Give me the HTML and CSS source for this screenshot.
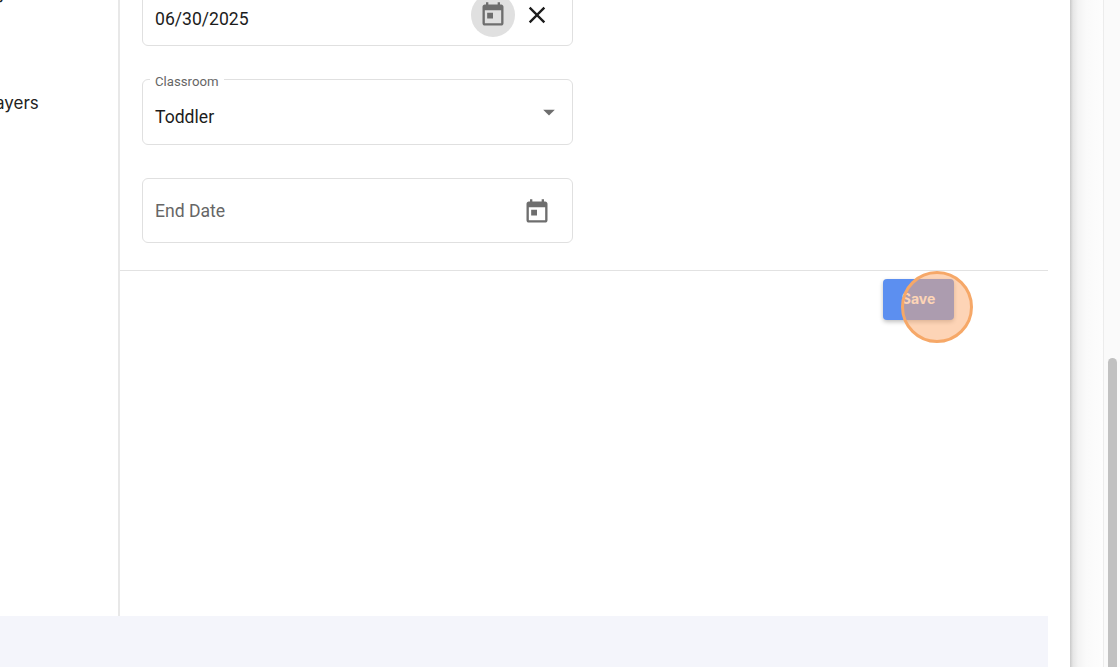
FILE: index.html
```html
<!DOCTYPE html>
<html lang="en">
<head>
    <meta charset="UTF-8">
    <meta name="viewport" content="width=device-width, initial-scale=1.0">
    <title>Edit Enrollment</title>
    <link rel="stylesheet" href="styles.css">
</head>
<body>
    <div class="app">
        <div class="content">
            <nav class="sidebar">
                <div class="nav-item nav-family">Family</div>
                <div class="nav-item nav-players">Players</div>
            </nav>
            <main class="panel">
                <form class="fields">
                    <div class="field field-value">
                        <span class="field-text">06/30/2025</span>
                        <span class="icon-btn icon-active">
                            <svg class="icon" viewBox="0 0 24 24"><path d="M19 3h-1V1h-2v2H8V1H6v2H5c-1.11 0-1.99.9-1.99 2L3 19c0 1.1.89 2 2 2h14c1.1 0 2-.9 2-2V5c0-1.1-.9-2-2-2zm0 16H5V8h14v11zM7 10h5v5H7z"/></svg>
                        </span>
                        <span class="icon-btn">
                            <svg class="icon icon-dark" viewBox="0 0 24 24"><path d="M19 6.41 17.59 5 12 10.59 6.41 5 5 6.41 10.59 12 5 17.59 6.41 19 12 13.41 17.59 19 19 17.59 13.41 12z"/></svg>
                        </span>
                    </div>
                    <div class="field field-select">
                        <label class="field-label">Classroom</label>
                        <span class="field-text">Toddler</span>
                        <svg class="icon caret" viewBox="0 0 24 24"><path d="M7 10l5 5 5-5z"/></svg>
                    </div>
                    <div class="field field-empty">
                        <span class="field-text placeholder">End Date</span>
                        <span class="icon-btn">
                            <svg class="icon" viewBox="0 0 24 24"><path d="M19 3h-1V1h-2v2H8V1H6v2H5c-1.11 0-1.99.9-1.99 2L3 19c0 1.1.89 2 2 2h14c1.1 0 2-.9 2-2V5c0-1.1-.9-2-2-2zm0 16H5V8h14v11zM7 10h5v5H7z"/></svg>
                        </span>
                    </div>
                </form>
                <div class="actions">
                    <button class="save" type="button">Save</button>
                    <span class="click-mark"></span>
                </div>
            </main>
        </div>
        <div class="footer"></div>
    </div>
    <div class="gutter"></div>
    <div class="scrollbar"><div class="thumb"></div></div>
</body>
</html>
```

FILE: styles.css
```css
html, body {
    height: 100%;
}
body {
    margin: 0;
    display: flex;
    overflow: hidden;
    background: #fff;
    font-family: Roboto, "Liberation Sans", sans-serif;
    color: #1c1c1c;
}
.app {
    flex: none;
    width: 1070px;
    display: flex;
    flex-direction: column;
    background: #fff;
}
.content {
    flex: 1;
    width: 1048px;
    display: flex;
    min-height: 0;
}
.footer {
    flex: none;
    width: 1048px;
    height: 51px;
    background: #f4f5fb;
}

/* sidebar is scrolled off to the left */
.sidebar {
    flex: none;
    width: 120px;
    box-sizing: border-box;
    border-right: 2px solid #e8e8e8;
    overflow: hidden;
    font-family: Inter, sans-serif;
    font-size: 17px;
    color: #222;
}
.nav-item {
    white-space: nowrap;
    line-height: 24px;
}
.nav-family {
    margin-top: -19px;
    margin-left: -45px;
}
.nav-players {
    margin-top: 86px;
    margin-left: -20px;
}

.panel {
    flex: 1;
    min-width: 0;
}
.fields {
    margin-top: -20px;
    padding: 0 0 0 22px;
    height: 291px;
    box-sizing: border-box;
    border-bottom: 1px solid #e2e2e2;
}
.field {
    position: relative;
    width: 431px;
    height: 66px;
    box-sizing: border-box;
    margin-bottom: 33px;
    padding: 0 13px 0 12px;
    display: flex;
    align-items: center;
    border: 1px solid #e0e0e0;
    border-radius: 6px;
}
.field-empty {
    height: 65px;
}
.field-text {
    flex: 1;
    font-size: 17.6px;
    line-height: 24px;
}
.field-value .field-text {
    padding-top: 12px;
}
.field-select .field-text {
    padding-top: 9px;
}
.placeholder {
    color: #666;
}
.field-label {
    position: absolute;
    top: -6px;
    left: 7px;
    padding: 0 5px;
    background: #fff;
    font-size: 13.2px;
    line-height: 16px;
    color: #666;
}
.icon {
    display: block;
    width: 28px;
    height: 28px;
    fill: #6e6e6e;
}
.icon-dark {
    fill: #1c1c1c;
}
.icon-btn {
    flex: none;
    width: 44px;
    height: 44px;
    display: flex;
    align-items: center;
    justify-content: center;
    border-radius: 50%;
}
.icon-active {
    background: #e0e0e0;
}
.field-value .icon-btn {
    margin-top: 4px;
}
.field-empty .icon-btn {
    margin-top: 3px;
}
.caret {
    margin-right: -4px;
}

.actions {
    position: relative;
    padding: 8px 94px 0 0;
    display: flex;
    justify-content: flex-end;
}
.save {
    width: 71px;
    height: 41px;
    padding: 0 0 3px;
    border: none;
    border-radius: 4px;
    background: #5c8ff0;
    box-shadow: 0 2px 4px rgba(0,0,0,0.25);
    color: #fff;
    font-family: Inter, sans-serif;
    font-size: 14px;
    font-weight: 700;
}
.click-mark {
    position: absolute;
    top: 0;
    left: 781px;
    width: 72px;
    height: 72px;
    box-sizing: border-box;
    border: 3px solid #f6a868;
    border-radius: 50%;
    background: rgba(252,170,110,0.5);
}

.gutter {
    flex: none;
    width: 34px;
    border-right: 1px solid #ececec;
    box-sizing: border-box;
    background: linear-gradient(to right, #c9c9c9 0, #e6e6e6 3px, #f3f3f3 8px, #fafafa 16px, #fdfdfd 100%);
}
.scrollbar {
    flex: none;
    width: 16px;
    box-sizing: border-box;
    padding: 358px 3px 0 4px;
    background: #fafafa;
}
.thumb {
    height: 309px;
    border-radius: 4.5px 4.5px 0 0;
    background: #c1c1c1;
}
```
